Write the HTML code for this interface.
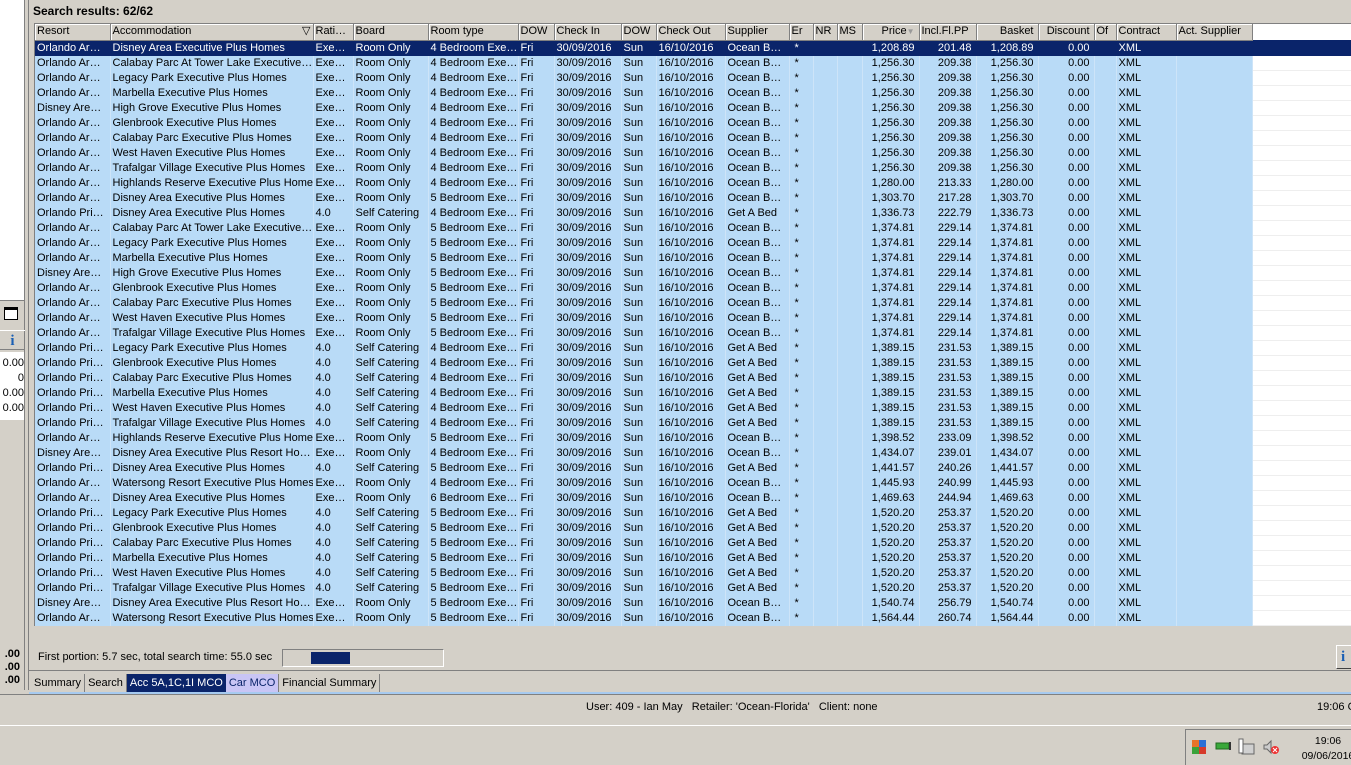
<!DOCTYPE html>
<html><head><meta charset="utf-8">
<style>
*{margin:0;padding:0;box-sizing:border-box}
body{width:1351px;height:765px;background:#d4d0c8;font-family:"Liberation Sans",Tahoma,sans-serif;font-size:11px;color:#000;position:relative;overflow:hidden}
.abs{position:absolute;white-space:nowrap}
#grid{position:absolute;left:34px;top:23px;width:1317px;height:603px;background:#fff;border-top:1px solid #808080;border-left:1px solid #808080;overflow:hidden}
table{border-collapse:collapse;table-layout:fixed;width:1316px}
td,th{height:15px;line-height:15px;white-space:nowrap;overflow:hidden;padding:0 2px;font-weight:normal;text-align:left;border-right:1px solid #cde4f8}
th{height:16px;background:#d4d0c8;border-right:1px solid #808080;border-bottom:1px solid #808080;box-shadow:inset 1px 1px 0 #fff}
th.e{background:#fff;border:none;box-shadow:none}
tr.r td{background:#b9dbf7}
tr.r td.e{background:#fff;border-right:none;border-bottom:1px solid #eee}
tr.s td{background:#0a246a;color:#fff;border-right-color:#0a246a}
.n{text-align:right;padding-right:4px}
</style></head><body>
<div class="abs" style="left:0;top:0;width:25px;height:300px;background:#fff;border-right:1px solid #808080"></div>
<div class="abs" style="left:0;top:300px;width:25px;height:390px;border-right:1px solid #808080;border-top:1px solid #808080"></div>
<div class="abs" style="left:4px;top:307px;width:14px;height:13px;border:1px solid #000;border-top-width:3px;background:#fff"></div>
<div class="abs" style="left:0;top:330px;width:25px;height:20px;border-bottom:1px solid #808080;border-top:1px solid #fff;color:#1a5fb4;font-weight:bold;font-family:'Liberation Serif',serif;font-size:15px;text-align:center;line-height:20px">i</div>
<div class="abs" style="left:0;top:352px;width:24px;height:68px;background:#fff;text-align:right;line-height:15px;padding-top:4px;overflow:hidden">0.00<br>0<br>0.00<br>0.00</div>
<div class="abs" style="left:0;top:648px;width:20px;font-weight:bold;line-height:13px;text-align:right">.00<br>.00<br>.00</div>
<div class="abs" style="left:28px;top:0;width:1px;height:690px;background:#808080"></div>
<div class="abs" style="left:33px;top:4px;font-weight:bold;font-size:12px">Search results: 62/62</div>
<div id="grid"><table>
<colgroup><col style="width:75px"><col style="width:203px"><col style="width:40px"><col style="width:75px"><col style="width:90px"><col style="width:36px"><col style="width:67px"><col style="width:35px"><col style="width:69px"><col style="width:64px"><col style="width:24px"><col style="width:24px"><col style="width:25px"><col style="width:57px"><col style="width:57px"><col style="width:62px"><col style="width:56px"><col style="width:22px"><col style="width:60px"><col style="width:76px"><col style="width:99px"></colgroup>
<tr><th>Resort</th><th>Accommodation<span style="float:right">&#9661;</span></th><th>Rati…</th><th>Board</th><th>Room type</th><th>DOW</th><th>Check In</th><th>DOW</th><th>Check Out</th><th>Supplier</th><th>Er</th><th>NR</th><th>MS</th><th class="n">Price<span style="color:#999;font-size:8px">▼</span></th><th>Incl.Fl.PP</th><th class="n">Basket</th><th class="n">Discount</th><th>Of</th><th>Contract</th><th>Act. Supplier</th><th class="e"></th></tr>
<tr class="s"><td>Orlando Ar…</td><td>Disney Area Executive Plus Homes</td><td>Exe…</td><td>Room Only</td><td>4 Bedroom Exe…</td><td>Fri</td><td>30/09/2016</td><td>Sun</td><td>16/10/2016</td><td>Ocean B…</td><td>&nbsp;*</td><td></td><td></td><td class="n">1,208.89</td><td class="n">201.48</td><td class="n">1,208.89</td><td class="n">0.00</td><td></td><td>XML</td><td></td><td></td></tr>
<tr class="r"><td>Orlando Ar…</td><td>Calabay Parc At Tower Lake Executive…</td><td>Exe…</td><td>Room Only</td><td>4 Bedroom Exe…</td><td>Fri</td><td>30/09/2016</td><td>Sun</td><td>16/10/2016</td><td>Ocean B…</td><td>&nbsp;*</td><td></td><td></td><td class="n">1,256.30</td><td class="n">209.38</td><td class="n">1,256.30</td><td class="n">0.00</td><td></td><td>XML</td><td></td><td class="e"></td></tr>
<tr class="r"><td>Orlando Ar…</td><td>Legacy Park Executive Plus Homes</td><td>Exe…</td><td>Room Only</td><td>4 Bedroom Exe…</td><td>Fri</td><td>30/09/2016</td><td>Sun</td><td>16/10/2016</td><td>Ocean B…</td><td>&nbsp;*</td><td></td><td></td><td class="n">1,256.30</td><td class="n">209.38</td><td class="n">1,256.30</td><td class="n">0.00</td><td></td><td>XML</td><td></td><td class="e"></td></tr>
<tr class="r"><td>Orlando Ar…</td><td>Marbella Executive Plus Homes</td><td>Exe…</td><td>Room Only</td><td>4 Bedroom Exe…</td><td>Fri</td><td>30/09/2016</td><td>Sun</td><td>16/10/2016</td><td>Ocean B…</td><td>&nbsp;*</td><td></td><td></td><td class="n">1,256.30</td><td class="n">209.38</td><td class="n">1,256.30</td><td class="n">0.00</td><td></td><td>XML</td><td></td><td class="e"></td></tr>
<tr class="r"><td>Disney Are…</td><td>High Grove Executive Plus Homes</td><td>Exe…</td><td>Room Only</td><td>4 Bedroom Exe…</td><td>Fri</td><td>30/09/2016</td><td>Sun</td><td>16/10/2016</td><td>Ocean B…</td><td>&nbsp;*</td><td></td><td></td><td class="n">1,256.30</td><td class="n">209.38</td><td class="n">1,256.30</td><td class="n">0.00</td><td></td><td>XML</td><td></td><td class="e"></td></tr>
<tr class="r"><td>Orlando Ar…</td><td>Glenbrook Executive Plus Homes</td><td>Exe…</td><td>Room Only</td><td>4 Bedroom Exe…</td><td>Fri</td><td>30/09/2016</td><td>Sun</td><td>16/10/2016</td><td>Ocean B…</td><td>&nbsp;*</td><td></td><td></td><td class="n">1,256.30</td><td class="n">209.38</td><td class="n">1,256.30</td><td class="n">0.00</td><td></td><td>XML</td><td></td><td class="e"></td></tr>
<tr class="r"><td>Orlando Ar…</td><td>Calabay Parc Executive Plus Homes</td><td>Exe…</td><td>Room Only</td><td>4 Bedroom Exe…</td><td>Fri</td><td>30/09/2016</td><td>Sun</td><td>16/10/2016</td><td>Ocean B…</td><td>&nbsp;*</td><td></td><td></td><td class="n">1,256.30</td><td class="n">209.38</td><td class="n">1,256.30</td><td class="n">0.00</td><td></td><td>XML</td><td></td><td class="e"></td></tr>
<tr class="r"><td>Orlando Ar…</td><td>West Haven Executive Plus Homes</td><td>Exe…</td><td>Room Only</td><td>4 Bedroom Exe…</td><td>Fri</td><td>30/09/2016</td><td>Sun</td><td>16/10/2016</td><td>Ocean B…</td><td>&nbsp;*</td><td></td><td></td><td class="n">1,256.30</td><td class="n">209.38</td><td class="n">1,256.30</td><td class="n">0.00</td><td></td><td>XML</td><td></td><td class="e"></td></tr>
<tr class="r"><td>Orlando Ar…</td><td>Trafalgar Village Executive Plus Homes</td><td>Exe…</td><td>Room Only</td><td>4 Bedroom Exe…</td><td>Fri</td><td>30/09/2016</td><td>Sun</td><td>16/10/2016</td><td>Ocean B…</td><td>&nbsp;*</td><td></td><td></td><td class="n">1,256.30</td><td class="n">209.38</td><td class="n">1,256.30</td><td class="n">0.00</td><td></td><td>XML</td><td></td><td class="e"></td></tr>
<tr class="r"><td>Orlando Ar…</td><td>Highlands Reserve Executive Plus Homes</td><td>Exe…</td><td>Room Only</td><td>4 Bedroom Exe…</td><td>Fri</td><td>30/09/2016</td><td>Sun</td><td>16/10/2016</td><td>Ocean B…</td><td>&nbsp;*</td><td></td><td></td><td class="n">1,280.00</td><td class="n">213.33</td><td class="n">1,280.00</td><td class="n">0.00</td><td></td><td>XML</td><td></td><td class="e"></td></tr>
<tr class="r"><td>Orlando Ar…</td><td>Disney Area Executive Plus Homes</td><td>Exe…</td><td>Room Only</td><td>5 Bedroom Exe…</td><td>Fri</td><td>30/09/2016</td><td>Sun</td><td>16/10/2016</td><td>Ocean B…</td><td>&nbsp;*</td><td></td><td></td><td class="n">1,303.70</td><td class="n">217.28</td><td class="n">1,303.70</td><td class="n">0.00</td><td></td><td>XML</td><td></td><td class="e"></td></tr>
<tr class="r"><td>Orlando Pri…</td><td>Disney Area Executive Plus Homes</td><td>4.0</td><td>Self Catering</td><td>4 Bedroom Exe…</td><td>Fri</td><td>30/09/2016</td><td>Sun</td><td>16/10/2016</td><td>Get A Bed</td><td>&nbsp;*</td><td></td><td></td><td class="n">1,336.73</td><td class="n">222.79</td><td class="n">1,336.73</td><td class="n">0.00</td><td></td><td>XML</td><td></td><td class="e"></td></tr>
<tr class="r"><td>Orlando Ar…</td><td>Calabay Parc At Tower Lake Executive…</td><td>Exe…</td><td>Room Only</td><td>5 Bedroom Exe…</td><td>Fri</td><td>30/09/2016</td><td>Sun</td><td>16/10/2016</td><td>Ocean B…</td><td>&nbsp;*</td><td></td><td></td><td class="n">1,374.81</td><td class="n">229.14</td><td class="n">1,374.81</td><td class="n">0.00</td><td></td><td>XML</td><td></td><td class="e"></td></tr>
<tr class="r"><td>Orlando Ar…</td><td>Legacy Park Executive Plus Homes</td><td>Exe…</td><td>Room Only</td><td>5 Bedroom Exe…</td><td>Fri</td><td>30/09/2016</td><td>Sun</td><td>16/10/2016</td><td>Ocean B…</td><td>&nbsp;*</td><td></td><td></td><td class="n">1,374.81</td><td class="n">229.14</td><td class="n">1,374.81</td><td class="n">0.00</td><td></td><td>XML</td><td></td><td class="e"></td></tr>
<tr class="r"><td>Orlando Ar…</td><td>Marbella Executive Plus Homes</td><td>Exe…</td><td>Room Only</td><td>5 Bedroom Exe…</td><td>Fri</td><td>30/09/2016</td><td>Sun</td><td>16/10/2016</td><td>Ocean B…</td><td>&nbsp;*</td><td></td><td></td><td class="n">1,374.81</td><td class="n">229.14</td><td class="n">1,374.81</td><td class="n">0.00</td><td></td><td>XML</td><td></td><td class="e"></td></tr>
<tr class="r"><td>Disney Are…</td><td>High Grove Executive Plus Homes</td><td>Exe…</td><td>Room Only</td><td>5 Bedroom Exe…</td><td>Fri</td><td>30/09/2016</td><td>Sun</td><td>16/10/2016</td><td>Ocean B…</td><td>&nbsp;*</td><td></td><td></td><td class="n">1,374.81</td><td class="n">229.14</td><td class="n">1,374.81</td><td class="n">0.00</td><td></td><td>XML</td><td></td><td class="e"></td></tr>
<tr class="r"><td>Orlando Ar…</td><td>Glenbrook Executive Plus Homes</td><td>Exe…</td><td>Room Only</td><td>5 Bedroom Exe…</td><td>Fri</td><td>30/09/2016</td><td>Sun</td><td>16/10/2016</td><td>Ocean B…</td><td>&nbsp;*</td><td></td><td></td><td class="n">1,374.81</td><td class="n">229.14</td><td class="n">1,374.81</td><td class="n">0.00</td><td></td><td>XML</td><td></td><td class="e"></td></tr>
<tr class="r"><td>Orlando Ar…</td><td>Calabay Parc Executive Plus Homes</td><td>Exe…</td><td>Room Only</td><td>5 Bedroom Exe…</td><td>Fri</td><td>30/09/2016</td><td>Sun</td><td>16/10/2016</td><td>Ocean B…</td><td>&nbsp;*</td><td></td><td></td><td class="n">1,374.81</td><td class="n">229.14</td><td class="n">1,374.81</td><td class="n">0.00</td><td></td><td>XML</td><td></td><td class="e"></td></tr>
<tr class="r"><td>Orlando Ar…</td><td>West Haven Executive Plus Homes</td><td>Exe…</td><td>Room Only</td><td>5 Bedroom Exe…</td><td>Fri</td><td>30/09/2016</td><td>Sun</td><td>16/10/2016</td><td>Ocean B…</td><td>&nbsp;*</td><td></td><td></td><td class="n">1,374.81</td><td class="n">229.14</td><td class="n">1,374.81</td><td class="n">0.00</td><td></td><td>XML</td><td></td><td class="e"></td></tr>
<tr class="r"><td>Orlando Ar…</td><td>Trafalgar Village Executive Plus Homes</td><td>Exe…</td><td>Room Only</td><td>5 Bedroom Exe…</td><td>Fri</td><td>30/09/2016</td><td>Sun</td><td>16/10/2016</td><td>Ocean B…</td><td>&nbsp;*</td><td></td><td></td><td class="n">1,374.81</td><td class="n">229.14</td><td class="n">1,374.81</td><td class="n">0.00</td><td></td><td>XML</td><td></td><td class="e"></td></tr>
<tr class="r"><td>Orlando Pri…</td><td>Legacy Park Executive Plus Homes</td><td>4.0</td><td>Self Catering</td><td>4 Bedroom Exe…</td><td>Fri</td><td>30/09/2016</td><td>Sun</td><td>16/10/2016</td><td>Get A Bed</td><td>&nbsp;*</td><td></td><td></td><td class="n">1,389.15</td><td class="n">231.53</td><td class="n">1,389.15</td><td class="n">0.00</td><td></td><td>XML</td><td></td><td class="e"></td></tr>
<tr class="r"><td>Orlando Pri…</td><td>Glenbrook Executive Plus Homes</td><td>4.0</td><td>Self Catering</td><td>4 Bedroom Exe…</td><td>Fri</td><td>30/09/2016</td><td>Sun</td><td>16/10/2016</td><td>Get A Bed</td><td>&nbsp;*</td><td></td><td></td><td class="n">1,389.15</td><td class="n">231.53</td><td class="n">1,389.15</td><td class="n">0.00</td><td></td><td>XML</td><td></td><td class="e"></td></tr>
<tr class="r"><td>Orlando Pri…</td><td>Calabay Parc Executive Plus Homes</td><td>4.0</td><td>Self Catering</td><td>4 Bedroom Exe…</td><td>Fri</td><td>30/09/2016</td><td>Sun</td><td>16/10/2016</td><td>Get A Bed</td><td>&nbsp;*</td><td></td><td></td><td class="n">1,389.15</td><td class="n">231.53</td><td class="n">1,389.15</td><td class="n">0.00</td><td></td><td>XML</td><td></td><td class="e"></td></tr>
<tr class="r"><td>Orlando Pri…</td><td>Marbella Executive Plus Homes</td><td>4.0</td><td>Self Catering</td><td>4 Bedroom Exe…</td><td>Fri</td><td>30/09/2016</td><td>Sun</td><td>16/10/2016</td><td>Get A Bed</td><td>&nbsp;*</td><td></td><td></td><td class="n">1,389.15</td><td class="n">231.53</td><td class="n">1,389.15</td><td class="n">0.00</td><td></td><td>XML</td><td></td><td class="e"></td></tr>
<tr class="r"><td>Orlando Pri…</td><td>West Haven Executive Plus Homes</td><td>4.0</td><td>Self Catering</td><td>4 Bedroom Exe…</td><td>Fri</td><td>30/09/2016</td><td>Sun</td><td>16/10/2016</td><td>Get A Bed</td><td>&nbsp;*</td><td></td><td></td><td class="n">1,389.15</td><td class="n">231.53</td><td class="n">1,389.15</td><td class="n">0.00</td><td></td><td>XML</td><td></td><td class="e"></td></tr>
<tr class="r"><td>Orlando Pri…</td><td>Trafalgar Village Executive Plus Homes</td><td>4.0</td><td>Self Catering</td><td>4 Bedroom Exe…</td><td>Fri</td><td>30/09/2016</td><td>Sun</td><td>16/10/2016</td><td>Get A Bed</td><td>&nbsp;*</td><td></td><td></td><td class="n">1,389.15</td><td class="n">231.53</td><td class="n">1,389.15</td><td class="n">0.00</td><td></td><td>XML</td><td></td><td class="e"></td></tr>
<tr class="r"><td>Orlando Ar…</td><td>Highlands Reserve Executive Plus Homes</td><td>Exe…</td><td>Room Only</td><td>5 Bedroom Exe…</td><td>Fri</td><td>30/09/2016</td><td>Sun</td><td>16/10/2016</td><td>Ocean B…</td><td>&nbsp;*</td><td></td><td></td><td class="n">1,398.52</td><td class="n">233.09</td><td class="n">1,398.52</td><td class="n">0.00</td><td></td><td>XML</td><td></td><td class="e"></td></tr>
<tr class="r"><td>Disney Are…</td><td>Disney Area Executive Plus Resort Ho…</td><td>Exe…</td><td>Room Only</td><td>4 Bedroom Exe…</td><td>Fri</td><td>30/09/2016</td><td>Sun</td><td>16/10/2016</td><td>Ocean B…</td><td>&nbsp;*</td><td></td><td></td><td class="n">1,434.07</td><td class="n">239.01</td><td class="n">1,434.07</td><td class="n">0.00</td><td></td><td>XML</td><td></td><td class="e"></td></tr>
<tr class="r"><td>Orlando Pri…</td><td>Disney Area Executive Plus Homes</td><td>4.0</td><td>Self Catering</td><td>5 Bedroom Exe…</td><td>Fri</td><td>30/09/2016</td><td>Sun</td><td>16/10/2016</td><td>Get A Bed</td><td>&nbsp;*</td><td></td><td></td><td class="n">1,441.57</td><td class="n">240.26</td><td class="n">1,441.57</td><td class="n">0.00</td><td></td><td>XML</td><td></td><td class="e"></td></tr>
<tr class="r"><td>Orlando Ar…</td><td>Watersong Resort Executive Plus Homes</td><td>Exe…</td><td>Room Only</td><td>4 Bedroom Exe…</td><td>Fri</td><td>30/09/2016</td><td>Sun</td><td>16/10/2016</td><td>Ocean B…</td><td>&nbsp;*</td><td></td><td></td><td class="n">1,445.93</td><td class="n">240.99</td><td class="n">1,445.93</td><td class="n">0.00</td><td></td><td>XML</td><td></td><td class="e"></td></tr>
<tr class="r"><td>Orlando Ar…</td><td>Disney Area Executive Plus Homes</td><td>Exe…</td><td>Room Only</td><td>6 Bedroom Exe…</td><td>Fri</td><td>30/09/2016</td><td>Sun</td><td>16/10/2016</td><td>Ocean B…</td><td>&nbsp;*</td><td></td><td></td><td class="n">1,469.63</td><td class="n">244.94</td><td class="n">1,469.63</td><td class="n">0.00</td><td></td><td>XML</td><td></td><td class="e"></td></tr>
<tr class="r"><td>Orlando Pri…</td><td>Legacy Park Executive Plus Homes</td><td>4.0</td><td>Self Catering</td><td>5 Bedroom Exe…</td><td>Fri</td><td>30/09/2016</td><td>Sun</td><td>16/10/2016</td><td>Get A Bed</td><td>&nbsp;*</td><td></td><td></td><td class="n">1,520.20</td><td class="n">253.37</td><td class="n">1,520.20</td><td class="n">0.00</td><td></td><td>XML</td><td></td><td class="e"></td></tr>
<tr class="r"><td>Orlando Pri…</td><td>Glenbrook Executive Plus Homes</td><td>4.0</td><td>Self Catering</td><td>5 Bedroom Exe…</td><td>Fri</td><td>30/09/2016</td><td>Sun</td><td>16/10/2016</td><td>Get A Bed</td><td>&nbsp;*</td><td></td><td></td><td class="n">1,520.20</td><td class="n">253.37</td><td class="n">1,520.20</td><td class="n">0.00</td><td></td><td>XML</td><td></td><td class="e"></td></tr>
<tr class="r"><td>Orlando Pri…</td><td>Calabay Parc Executive Plus Homes</td><td>4.0</td><td>Self Catering</td><td>5 Bedroom Exe…</td><td>Fri</td><td>30/09/2016</td><td>Sun</td><td>16/10/2016</td><td>Get A Bed</td><td>&nbsp;*</td><td></td><td></td><td class="n">1,520.20</td><td class="n">253.37</td><td class="n">1,520.20</td><td class="n">0.00</td><td></td><td>XML</td><td></td><td class="e"></td></tr>
<tr class="r"><td>Orlando Pri…</td><td>Marbella Executive Plus Homes</td><td>4.0</td><td>Self Catering</td><td>5 Bedroom Exe…</td><td>Fri</td><td>30/09/2016</td><td>Sun</td><td>16/10/2016</td><td>Get A Bed</td><td>&nbsp;*</td><td></td><td></td><td class="n">1,520.20</td><td class="n">253.37</td><td class="n">1,520.20</td><td class="n">0.00</td><td></td><td>XML</td><td></td><td class="e"></td></tr>
<tr class="r"><td>Orlando Pri…</td><td>West Haven Executive Plus Homes</td><td>4.0</td><td>Self Catering</td><td>5 Bedroom Exe…</td><td>Fri</td><td>30/09/2016</td><td>Sun</td><td>16/10/2016</td><td>Get A Bed</td><td>&nbsp;*</td><td></td><td></td><td class="n">1,520.20</td><td class="n">253.37</td><td class="n">1,520.20</td><td class="n">0.00</td><td></td><td>XML</td><td></td><td class="e"></td></tr>
<tr class="r"><td>Orlando Pri…</td><td>Trafalgar Village Executive Plus Homes</td><td>4.0</td><td>Self Catering</td><td>5 Bedroom Exe…</td><td>Fri</td><td>30/09/2016</td><td>Sun</td><td>16/10/2016</td><td>Get A Bed</td><td>&nbsp;*</td><td></td><td></td><td class="n">1,520.20</td><td class="n">253.37</td><td class="n">1,520.20</td><td class="n">0.00</td><td></td><td>XML</td><td></td><td class="e"></td></tr>
<tr class="r"><td>Disney Are…</td><td>Disney Area Executive Plus Resort Ho…</td><td>Exe…</td><td>Room Only</td><td>5 Bedroom Exe…</td><td>Fri</td><td>30/09/2016</td><td>Sun</td><td>16/10/2016</td><td>Ocean B…</td><td>&nbsp;*</td><td></td><td></td><td class="n">1,540.74</td><td class="n">256.79</td><td class="n">1,540.74</td><td class="n">0.00</td><td></td><td>XML</td><td></td><td class="e"></td></tr>
<tr class="r"><td>Orlando Ar…</td><td>Watersong Resort Executive Plus Homes</td><td>Exe…</td><td>Room Only</td><td>5 Bedroom Exe…</td><td>Fri</td><td>30/09/2016</td><td>Sun</td><td>16/10/2016</td><td>Ocean B…</td><td>&nbsp;*</td><td></td><td></td><td class="n">1,564.44</td><td class="n">260.74</td><td class="n">1,564.44</td><td class="n">0.00</td><td></td><td>XML</td><td></td><td class="e"></td></tr>
</table>
</div>
<div class="abs" style="left:38px;top:651px">First portion: 5.7 sec, total search time: 55.0 sec</div>
<div class="abs" style="left:282px;top:649px;width:162px;height:18px;border:1px solid #808080;border-right-color:#fff;border-bottom-color:#fff"><div style="position:absolute;left:28px;top:2px;width:39px;height:12px;background:#0a246a"></div></div>
<div class="abs" style="left:1336px;top:645px;width:20px;height:24px;border:1px solid #fff;border-right-color:#404040;border-bottom-color:#404040;color:#1a5fb4;font-weight:bold;font-family:'Liberation Serif',serif;font-size:15px;padding-left:4px;line-height:22px">i</div>
<div class="abs" style="left:29px;top:670px;width:1322px;height:1px;background:#808080"></div>
<div class="abs" style="left:31px;top:674px;height:18px;line-height:18px;display:flex">
<span style="padding:0 3px;border-right:1px solid #808080">Summary</span><span style="padding:0 3px;border-right:1px solid #808080">Search</span><span style="padding:0 3px;background:#0a246a;color:#fff">Acc 5A,1C,1I MCO</span><span style="padding:0 3px;background:#c9c5f5;color:#0a246a;border-right:1px solid #808080">Car MCO</span><span style="padding:0 3px;border-right:1px solid #808080">Financial Summary</span></div>
<div class="abs" style="left:29px;top:692px;width:1322px;height:2px;background:#a6caf0"></div>
<div class="abs" style="left:0;top:694px;width:1351px;height:1px;background:#808080"></div>
<div class="abs" style="left:586px;top:701px">User: 409 - Ian May&nbsp;&nbsp;&nbsp;Retailer: 'Ocean-Florida'&nbsp;&nbsp;&nbsp;Client: none</div>
<div class="abs" style="left:1317px;top:701px">19:06 O</div>
<div class="abs" style="left:0;top:725px;width:1351px;height:1px;background:#fff"></div>
<div class="abs" style="left:1185px;top:729px;width:166px;height:36px;border-left:1px solid #808080;border-top:1px solid #808080"></div>
<svg class="abs" style="left:1190px;top:737px" width="95" height="20">
<rect x="2" y="3" width="7" height="7" fill="#e8732a"/><rect x="9" y="3" width="7" height="7" fill="#2a6fd6"/><rect x="2" y="10" width="7" height="7" fill="#3aa23a"/><rect x="9" y="10" width="7" height="7" fill="#d63a2a"/>
<rect x="26" y="6" width="13" height="6" fill="#3aa83a" stroke="#1f6a1f"/><rect x="39" y="5" width="2" height="8" fill="#333"/>
<rect x="52" y="7" width="12" height="10" fill="#d0d0d0" stroke="#666"/><rect x="49" y="2" width="4" height="14" fill="#fff" stroke="#666"/>
<path d="M74 8h3l4-4v12l-4-4h-3z" fill="#ccc" stroke="#666"/><circle cx="85" cy="13" r="4" fill="#e33" /><path d="M83 11l4 4M87 11l-4 4" stroke="#fff"/>
</svg>
<div class="abs" style="left:1300px;top:734px;width:56px;text-align:center;line-height:15px;font-size:10.5px">19:06<br>09/06/2016</div>
</body></html>
